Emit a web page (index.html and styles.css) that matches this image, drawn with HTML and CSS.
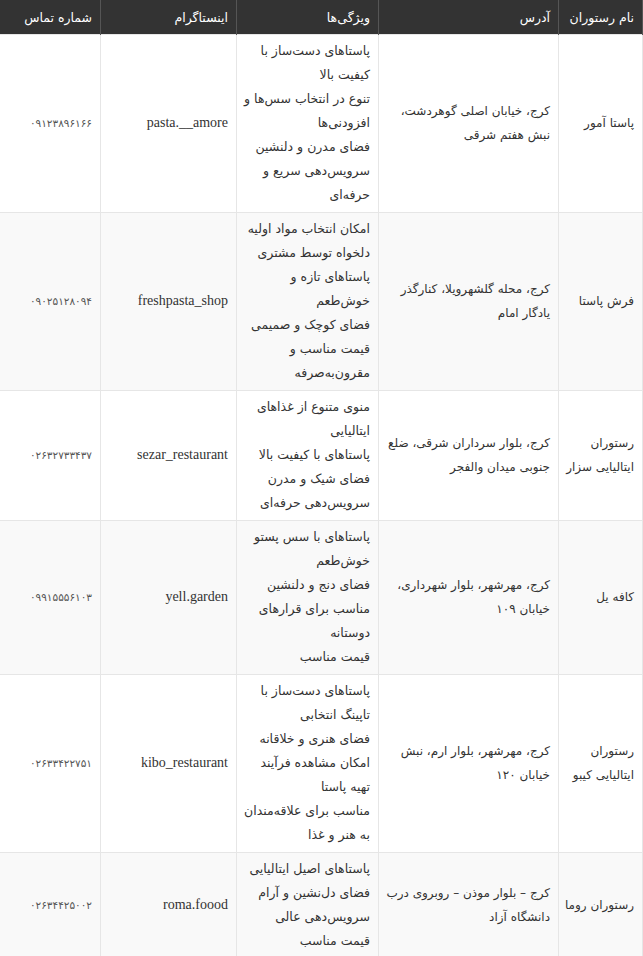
FILE: index.html
```html
<!DOCTYPE html>
<html lang="fa" dir="rtl">
<head>
<meta charset="utf-8">
<title>رستوران‌های پاستا کرج</title>
<link rel="stylesheet" href="styles.css">
</head>
<body>
<table class="tbl">
  <colgroup>
    <col class="c-name">
    <col class="c-addr">
    <col class="c-feat">
    <col class="c-insta">
    <col class="c-phone">
  </colgroup>
  <thead>
    <tr>
      <th>نام رستوران</th>
      <th>آدرس</th>
      <th>ویژگی‌ها</th>
      <th>اینستاگرام</th>
      <th>شماره تماس</th>
    </tr>
  </thead>
  <tbody>
    <tr>
      <td class="name">پاستا آمور</td>
      <td class="addr">کرج، خیابان اصلی گوهردشت،<br>نبش هفتم شرقی</td>
      <td class="feat">پاستاهای دست‌ساز با<br>کیفیت بالا<br>تنوع در انتخاب سس‌ها و<br>افزودنی‌ها<br>فضای مدرن و دلنشین<br>سرویس‌دهی سریع و<br>حرفه‌ای</td>
      <td class="insta">pasta.__amore</td>
      <td class="phone">۰۹۱۲۳۸۹۶۱۶۶</td>
    </tr>
    <tr>
      <td class="name">فرش پاستا</td>
      <td class="addr">کرج، محله گلشهرویلا، کنارگذر<br>یادگار امام</td>
      <td class="feat">امکان انتخاب مواد اولیه<br>دلخواه توسط مشتری<br>پاستاهای تازه و<br>خوش‌طعم<br>فضای کوچک و صمیمی<br>قیمت مناسب و<br>مقرون‌به‌صرفه</td>
      <td class="insta">freshpasta_shop</td>
      <td class="phone">۰۹۰۲۵۱۲۸۰۹۴</td>
    </tr>
    <tr>
      <td class="name">رستوران<br>ایتالیایی سزار</td>
      <td class="addr">کرج، بلوار سرداران شرقی، ضلع<br>جنوبی میدان والفجر</td>
      <td class="feat">منوی متنوع از غذاهای<br>ایتالیایی<br>پاستاهای با کیفیت بالا<br>فضای شیک و مدرن<br>سرویس‌دهی حرفه‌ای</td>
      <td class="insta">sezar_restaurant</td>
      <td class="phone">۰۲۶۳۲۷۳۳۴۳۷</td>
    </tr>
    <tr>
      <td class="name">کافه یل</td>
      <td class="addr">کرج، مهرشهر، بلوار شهرداری،<br>خیابان ۱۰۹</td>
      <td class="feat">پاستاهای با سس پستو<br>خوش‌طعم<br>فضای دنج و دلنشین<br>مناسب برای قرارهای<br>دوستانه<br>قیمت مناسب</td>
      <td class="insta">yell.garden</td>
      <td class="phone">۰۹۹۱۵۵۵۶۱۰۳</td>
    </tr>
    <tr>
      <td class="name">رستوران<br>ایتالیایی کیبو</td>
      <td class="addr">کرج، مهرشهر، بلوار ارم، نبش<br>خیابان ۱۲۰</td>
      <td class="feat">پاستاهای دست‌ساز با<br>تاپینگ انتخابی<br>فضای هنری و خلاقانه<br>امکان مشاهده فرآیند<br>تهیه پاستا<br>مناسب برای علاقه‌مندان<br>به هنر و غذا</td>
      <td class="insta">kibo_restaurant</td>
      <td class="phone">۰۲۶۳۳۴۲۲۷۵۱</td>
    </tr>
    <tr>
      <td class="name">رستوران روما</td>
      <td class="addr">کرج – بلوار موذن – روبروی درب<br>دانشگاه آزاد</td>
      <td class="feat">پاستاهای اصیل ایتالیایی<br>فضای دل‌نشین و آرام<br>سرویس‌دهی عالی<br>قیمت مناسب</td>
      <td class="insta">roma.foood</td>
      <td class="phone">۰۲۶۳۴۴۲۵۰۰۲</td>
    </tr>
  </tbody>
</table>
</body>
</html>
```
FILE: styles.css
```css
html, body {
  margin: 0;
  padding: 0;
  background: #ffffff;
}

body {
  font-family: "DejaVu Sans", "Noto Sans", sans-serif;
  color: #333333;
}

.tbl {
  width: 643px;
  border-collapse: collapse;
  table-layout: fixed;
  direction: rtl;
  font-size: 12px;
}

.c-name { width: 84px; }
.c-addr { width: 180px; }
.c-feat { width: 142px; }
.c-insta { width: 136px; }
.c-phone { width: 101px; }

.tbl th {
  background: #333333;
  color: #ffffff;
  font-weight: normal;
  font-size: 12.5px;
  text-align: right;
  height: 34px;
  padding: 0 8px;
  border-left: 1px solid #555555;
  border-right: 1px solid #555555;
  white-space: nowrap;
}

.tbl td {
  border: 1px solid #e6e6e6;
  padding: 4px 8px 5px;
  line-height: 24px;
  text-align: right;
  vertical-align: middle;
  white-space: nowrap;
}

.tbl td.feat {
  font-size: 12.5px;
}

.tbl tbody tr:nth-child(even) td {
  background: #f9f9f9;
}

.tbl td.insta {
  font-family: "Liberation Serif", serif;
  font-size: 14px;
  direction: ltr;
  text-align: right;
}

.tbl td.phone {
  font-size: 10.5px;
  color: #555555;
}
```
